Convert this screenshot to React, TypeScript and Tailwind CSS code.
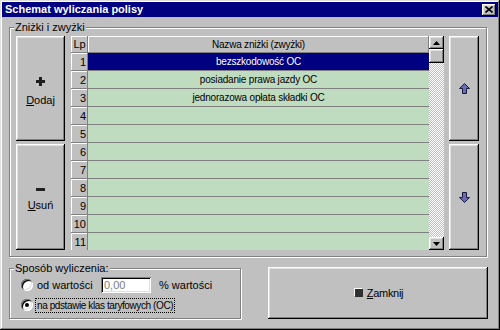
import React from "react";

const raised =
  "shadow-[inset_-1px_-1px_0_#000,inset_1px_1px_0_#fff,inset_-2px_-2px_0_#808080,inset_2px_2px_0_#dfdfdf]";
const raisedThin = "shadow-[inset_-1px_-1px_0_#808080,inset_1px_1px_0_#fff]";
const etched = "border border-[#808080] shadow-[inset_1px_1px_0_#fff,1px_1px_0_#fff]";

const rows = [
  "bezszkodowość OC",
  "posiadanie prawa jazdy OC",
  "jednorazowa opłata składki OC",
  "",
  "",
  "",
  "",
  "",
  "",
  "",
  "",
];

function ArrowIcon({ down }: { down?: boolean }) {
  return (
    <svg width="11" height="11" viewBox="0 0 11 11" className={down ? "rotate-180" : ""}>
      <path d="M5.5 0.5 L10.5 5.5 L7.5 5.5 L7.5 10.5 L3.5 10.5 L3.5 5.5 L0.5 5.5 Z" fill="#6b6bb0" stroke="#1a1a40" strokeWidth="1" />
    </svg>
  );
}

function Tri({ down }: { down?: boolean }) {
  return (
    <svg width="7" height="4" viewBox="0 0 7 4">
      {down ? <path d="M0 0 L7 0 L3.5 4 Z" fill="#000" /> : <path d="M3.5 0 L7 4 L0 4 Z" fill="#000" />}
    </svg>
  );
}

function Radio({ checked }: { checked?: boolean }) {
  return (
    <div className="w-[12px] h-[12px] rounded-full bg-white shadow-[inset_1px_1px_0_#808080,inset_-1px_-1px_0_#fff,inset_2px_2px_0_#000,inset_-2px_-2px_0_#dfdfdf] flex items-center justify-center">
      {checked && <div className="w-[4px] h-[4px] rounded-full bg-black" />}
    </div>
  );
}

export default function App() {
  return (
    <div className="w-[500px] h-[330px] bg-[#c0c0c0] p-[2px] font-['Liberation_Sans',Arial,sans-serif] text-[11px] text-black shadow-[inset_-1px_-1px_0_#000,inset_1px_1px_0_#dfdfdf,inset_-2px_-2px_0_#808080,inset_2px_2px_0_#fff] flex flex-col">
      {/* Title bar */}
      <div className="h-[15px] bg-[#000080] flex items-center justify-between pl-[3px] pr-[2px]">
        <span className="text-white font-bold text-[11px] leading-none">Schemat wyliczania polisy</span>
        <div className={`w-[14px] h-[12px] bg-[#c0c0c0] ${raised} flex items-center justify-center`}>
          <svg width="8" height="7" viewBox="0 0 8 7">
            <path d="M0.5 0.5 L7.5 6.5 M7.5 0.5 L0.5 6.5" stroke="#000" strokeWidth="1.6" />
          </svg>
        </div>
      </div>

      {/* Group: Zniżki i zwyżki */}
      <div className={`relative mt-[10px] ml-[7px] w-[478px] h-[230px] ${etched} flex pl-[6px] pt-[8px]`}>
        <span className="absolute -top-[8px] left-[4px] px-[1px] bg-[#c0c0c0] leading-[14px]">Zniżki i zwyżki</span>

        {/* Left buttons */}
        <div className="flex flex-col gap-[3px] w-[49px]">
          <div className={`h-[105px] pt-[5px] ${raised} flex flex-col items-center justify-center gap-[9px]`}>
            <svg width="9" height="9" viewBox="0 0 9 9">
              <rect x="3" y="0" width="3" height="9" fill="#202020" />
              <rect x="0" y="3" width="9" height="3" fill="#202020" />
            </svg>
            <span className="leading-none"><span className="underline">D</span>odaj</span>
          </div>
          <div className={`h-[106px] pt-[5px] ${raised} flex flex-col items-center justify-center gap-[9px]`}>
            <div className="w-[9px] h-[3px] bg-[#202020]" />
            <span className="leading-none"><span className="underline">U</span>suń</span>
          </div>
        </div>

        {/* Table */}
        <div className="ml-[6px] w-[358px] h-[214px] overflow-hidden flex flex-col">
          <div className="flex h-[17px] shrink-0">
            <div className={`w-[17px] bg-[#c0c0c0] ${raisedThin} flex items-center justify-center`}>Lp</div>
            <div className={`flex-1 bg-[#c0c0c0] ${raisedThin} flex items-center justify-center text-[10px] tracking-[-0.2px]`}>
              Nazwa zniżki (zwyżki)
            </div>
          </div>
          {rows.map((r, i) => (
            <div key={i} className="flex h-[18px] shrink-0">
              <div className={`w-[17px] bg-[#c0c0c0] ${raisedThin} flex items-center justify-end pr-[2px]`}>{i + 1}</div>
              <div
                className={
                  i === 0
                    ? "flex-1 bg-[#000080] text-white border-b border-[#808080] flex items-center justify-center text-[10px] tracking-[-0.2px]"
                    : "flex-1 bg-[#c0dcc0] border-b border-[#808080] flex items-center justify-center text-[10px] tracking-[-0.2px]"
                }
              >
                {r}
              </div>
            </div>
          ))}
        </div>

        {/* Scrollbar */}
        <div className="w-[15px] h-[214px] flex flex-col">
          <div className={`h-[13px] shrink-0 bg-[#c0c0c0] ${raised} flex items-center justify-center`}>
            <Tri />
          </div>
          <div className={`h-[14px] shrink-0 bg-[#c0c0c0] ${raised}`} />
          <div className="flex-1 bg-[repeating-conic-gradient(#c0c0c0_0_25%,#ffffff_0_50%)] bg-[length:2px_2px]" />
          <div className={`h-[13px] shrink-0 bg-[#c0c0c0] ${raised} flex items-center justify-center`}>
            <Tri down />
          </div>
        </div>

        {/* Right buttons */}
        <div className="ml-[5px] flex flex-col gap-[3px] w-[30px]">
          <div className={`h-[105px] ${raised} flex items-center justify-center`}>
            <ArrowIcon />
          </div>
          <div className={`h-[106px] ${raised} flex items-center justify-center`}>
            <ArrowIcon down />
          </div>
        </div>
      </div>

      {/* Bottom area */}
      <div className="flex items-start">
        <div className={`relative mt-[11px] ml-[7px] w-[232px] h-[51px] ${etched} flex flex-col pt-[8px] gap-[4px]`}>
          <span className="absolute -top-[8px] left-[4px] px-[1px] bg-[#c0c0c0] leading-[14px]">Sposób wyliczenia:</span>
          <div className="flex items-center h-[16px] pl-[11px]">
            <Radio />
            <span className="ml-[4px] w-[64px]">od wartości</span>
            <div className="w-[50px] h-[16px] bg-white shadow-[inset_1px_1px_0_#808080,inset_-1px_-1px_0_#fff,inset_2px_2px_0_#000,inset_-2px_-2px_0_#dfdfdf] flex items-center pl-[3px] text-[#808080]">
              0,00
            </div>
            <span className="ml-[8px]">% wartości</span>
          </div>
          <div className="flex items-center h-[16px] pl-[11px]">
            <Radio checked />
            <span className="ml-[2px] px-[1px] border border-dotted border-black leading-[13px] text-[10px] tracking-[-0.4px]">
              na pdstawie klas taryfowych (OC)
            </span>
          </div>
        </div>

        <div className={`mt-[10px] ml-[27px] w-[220px] h-[52px] ${raised} flex items-center justify-center gap-[4px] pl-[2px]`}>
          <div className="w-[8px] h-[8px] bg-[#303030] shadow-[-1px_-1px_0_#ffffff]" />
          <span className="tracking-[-0.3px]"><span className="underline">Z</span>amknij</span>
        </div>
      </div>
    </div>
  );
}
